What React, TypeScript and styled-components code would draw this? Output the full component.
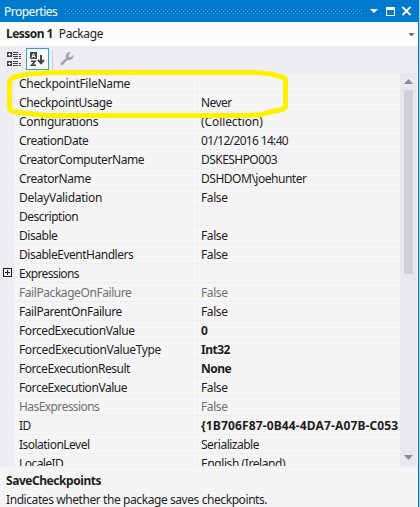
import React from "react";
import styled, { createGlobalStyle } from "styled-components";

const GlobalStyle = createGlobalStyle`
  * { box-sizing: border-box; }
  body { margin: 0; overflow: hidden; }
`;

const Panel = styled.div`
  position: relative;
  width: 420px;
  height: 507px;
  display: flex;
  flex-direction: column;
  overflow: hidden;
  background: #f5f5f5;
  border-right: 1px solid #a6d3f3;
  color: #1e1e1e;
  font: 12px/18px "Noto Sans", sans-serif;
  white-space: nowrap;
`;

const Content = styled.div`
  flex: 1;
  min-height: 0;
  display: flex;
  flex-direction: column;
  border-right: 1px solid #007acc;
`;

const TitleBar = styled.header`
  flex: none;
  height: 22px;
  padding: 0 7px 0 4px;
  display: flex;
  align-items: center;
  background: #007acc;
  color: #fff;
`;

const Title = styled.span`
  width: 61px;
  padding-top: 2px;
  letter-spacing: -0.5px;
`;

const Grip = styled.svg`
  width: 298px;
  height: 5px;
  flex: none;
`;

const WindowButtons = styled.svg`
  width: 43px;
  height: 22px;
  flex: none;
  margin-left: auto;
`;

const ObjectSelector = styled.div`
  flex: none;
  height: 24px;
  padding: 0 4px 0 6px;
  display: flex;
  align-items: center;
  gap: 6px;
  background: #fcfcfc;
`;

const ObjectName = styled.strong`
  font-weight: 700;
  letter-spacing: -0.55px;
`;

const ObjectType = styled.span`
  letter-spacing: -0.4px;
`;

const Caret = styled.svg`
  width: 5px;
  height: 3px;
  margin-left: auto;
  margin-top: 1px;
`;

const Toolbar = styled.div`
  flex: none;
  height: 27px;
  padding: 2px 0 0 3px;
  display: flex;
  align-items: flex-start;
  background: #eeeef2;
`;

const ToolButton = styled.div<{ $active?: boolean }>`
  width: 23px;
  height: 22px;
  display: flex;
  align-items: center;
  justify-content: center;
  border: 1px solid ${(p) => (p.$active ? "#3399ff" : "transparent")};
  background: ${(p) => (p.$active ? "#fcfcfc" : "transparent")};
`;

const Separator = styled.div`
  width: 1px;
  height: 20px;
  margin: 2px 2px 0 3px;
  background: #cccedb;
`;

const Body = styled.div`
  flex: none;
  height: 393px;
  display: flex;
  background: #eeeef2;
`;

const Rows = styled.div`
  flex: 1;
  min-width: 0;
  padding-top: 1px;
  overflow: hidden;
`;

const Row = styled.div<{ $muted?: boolean }>`
  height: 19px;
  display: grid;
  grid-template-columns: 15px 182px 1fr;
  color: ${(p) => (p.$muted ? "#717171" : "#1e1e1e")};
`;

const Gutter = styled.div`
  padding: 4px 0 0 3px;
  display: flex;
`;

const Cell = styled.div<{ $track?: number; $bold?: boolean; $value?: boolean }>`
  overflow: hidden;
  line-height: 19px;
  padding-left: ${(p) => (p.$value ? 3 : 4)}px;
  background: #f5f5f5;
  border-bottom: 1px solid #eeeef2;
  border-left: ${(p) => (p.$value ? "1px solid #eeeef2" : "0")};
  font-weight: ${(p) => (p.$bold ? 700 : 400)};
  letter-spacing: ${(p) => p.$track ?? 0}px;
`;

const ScrollTrack = styled.div`
  width: 18px;
  display: flex;
  flex-direction: column;
  align-items: center;
  background: #e8e8ec;
  border-right: 1px solid #f5f5f5;
`;

const ScrollArrow = styled.svg`
  width: 17px;
  height: 17px;
  flex: none;
`;

const Thumb = styled.div`
  width: 9px;
  height: 184px;
  margin-bottom: auto;
  background: #d0d1d7;
`;

const Help = styled.footer`
  flex: 1;
  padding: 5px 6px 0;
  border-top: 1px solid #eeeef2;
`;

const HelpTitle = styled.div`
  font-weight: 700;
  letter-spacing: -0.45px;
`;

const HelpText = styled.div`
  line-height: 20px;
  letter-spacing: -0.42px;
`;

const Highlight = styled.svg`
  position: absolute;
  left: 0;
  top: 66px;
  width: 300px;
  height: 56px;
`;

type Property = {
  name: string;
  nt: number;
  value?: string;
  vt?: number;
  bold?: boolean;
  muted?: boolean;
  expandable?: boolean;
};

const properties: Property[] = [
  { name: "CheckpointFileName", nt: -0.3 },
  { name: "CheckpointUsage", nt: -0.38, value: "Never", vt: -0.55 },
  { name: "Configurations", nt: -0.32, value: "(Collection)", vt: -0.1 },
  { name: "CreationDate", nt: -0.42, value: "01/12/2016 14:40", vt: -0.66 },
  { name: "CreatorComputerName", nt: -0.42, value: "DSKESHPO003", vt: -0.55 },
  { name: "CreatorName", nt: -0.4, value: "DSHDOM\\joehunter", vt: -0.48 },
  { name: "DelayValidation", nt: -0.3, value: "False", vt: -0.4 },
  { name: "Description", nt: -0.48 },
  { name: "Disable", nt: -0.45, value: "False", vt: -0.4 },
  { name: "DisableEventHandlers", nt: -0.48, value: "False", vt: -0.4 },
  { name: "Expressions", nt: -0.64, expandable: true },
  { name: "FailPackageOnFailure", nt: -0.43, value: "False", vt: -0.4, muted: true },
  { name: "FailParentOnFailure", nt: -0.44, value: "False", vt: -0.4 },
  { name: "ForcedExecutionValue", nt: -0.42, value: "0", bold: true },
  { name: "ForcedExecutionValueType", nt: -0.36, value: "Int32", vt: -0.5, bold: true },
  { name: "ForceExecutionResult", nt: -0.47, value: "None", vt: -0.5, bold: true },
  { name: "ForceExecutionValue", nt: -0.44, value: "False", vt: -0.4 },
  { name: "HasExpressions", nt: -0.57, value: "False", vt: -0.4, muted: true },
  { name: "ID", nt: -0.5, value: "{1B706F87-0B44-4DA7-A07B-C053", vt: 0.14, bold: true },
  { name: "IsolationLevel", nt: -0.52, value: "Serializable", vt: -0.5 },
  { name: "LocaleID", nt: -0.55, value: "English (Ireland)", vt: -0.42 },
];

const CategorizedIcon = () => (
  <svg width="15" height="15" viewBox="0 0 15 15" shapeRendering="crispEdges">
    <path fill="#424242" d="M0 0h5v5H0zM0 9h5v5H0z" />
    <path stroke="#eeeef2" d="M1 2.500h3M2.500 1v3M1 11.500h3M2.500 10v3" />
    <path
      stroke="#424242"
      d="M6 .5h5M6 2.500h5M12 2.500h2M6 4.500h5M12 4.500h2M7 6.500h4M12 6.500h2M6 9.500h5M6 11.500h5M12 11.500h2M6 13.500h5M12 13.500h2"
    />
  </svg>
);

const AlphabeticalIcon = () => (
  <svg width="15" height="15" viewBox="0 0 15 15">
    <path fill="#424242" d="M0 0h7v7H0z" />
    <path fill="none" stroke="#fcfcfc" d="M1.800 6 3.500 1.500 5.200 6M2.400 4.500h2.200" />
    <path fill="none" stroke="#424242" strokeWidth="1.6" d="M1 9.300h4.200L1.500 13.300H6" />
    <path fill="none" stroke="#424242" strokeWidth="2" d="M11 3v8M8 8l3 3.200L14 8" />
  </svg>
);

const WrenchIcon = () => (
  <svg width="14" height="14" viewBox="0 0 14 14">
    <path
      fill="#a5a5a8"
      d="M10.800.5 8.700 2.700v2.200h2.300l2.200-2.200c.9 2.900-1.300 5.800-4.500 5.300-.5-.1-.9-.1-1.300.2l-4.600 4.500C1.300 14.100-.3 12.300.8 10.900l4.600-4.500c.3-.3.3-.7.2-1.200C5.100 2 7.900-.3 10.800.5Z"
    />
  </svg>
);

export default function App() {
  return (
    <Panel>
      <GlobalStyle />
      <Content>
        <TitleBar>
          <Title>Properties</Title>
          <Grip shapeRendering="crispEdges">
            <defs>
              <pattern id="grip" width="4" height="4" patternUnits="userSpaceOnUse">
                <path fill="#59a8de" d="M0 0h1v1H0zM2 2h1v1H2z" />
              </pattern>
            </defs>
            <rect width="298" height="5" fill="url(#grip)" />
          </Grip>
          <WindowButtons viewBox="0 0 43 22">
            <path fill="#fff" d="M2 9h8l-4 4z" />
            <path fill="#fff" fillRule="evenodd" d="M18 7h9v9h-9zm1 3v5h7v-5z" />
            <path fill="none" stroke="#fff" strokeWidth="1.8" d="m34.500 7 8 8M42.500 7l-8 8" />
          </WindowButtons>
        </TitleBar>
        <ObjectSelector>
          <ObjectName>Lesson 1</ObjectName>
          <ObjectType>Package</ObjectType>
          <Caret viewBox="0 0 5 3">
            <path fill="#717171" d="M0 0h5v1L3 3H2L0 1z" />
          </Caret>
        </ObjectSelector>
        <Toolbar>
          <ToolButton><CategorizedIcon /></ToolButton>
          <ToolButton $active><AlphabeticalIcon /></ToolButton>
          <Separator />
          <ToolButton><WrenchIcon /></ToolButton>
        </Toolbar>
        <Body>
          <Rows>
            {properties.map((p) => (
              <Row key={p.name} $muted={p.muted}>
                <Gutter>
                  {p.expandable && (
                    <svg width="9" height="9" shapeRendering="crispEdges">
                      <path fill="none" stroke="#1e1e1e" d="M.5 .5h8v8h-8zM2 4.500h5M4.500 2v5" />
                    </svg>
                  )}
                </Gutter>
                <Cell $track={p.nt}>{p.name}</Cell>
                <Cell $value $bold={p.bold} $track={p.vt}>{p.value}</Cell>
              </Row>
            ))}
          </Rows>
          <ScrollTrack>
            <ScrollArrow viewBox="0 0 17 17">
              <path fill="#868999" d="M4 11h9L8.500 6z" />
            </ScrollArrow>
            <Thumb />
            <ScrollArrow viewBox="0 0 17 17">
              <path fill="#868999" d="M4 6h9l-4.500 5z" />
            </ScrollArrow>
          </ScrollTrack>
        </Body>
        <Help>
          <HelpTitle>SaveCheckpoints</HelpTitle>
          <HelpText>Indicates whether the package saves checkpoints.</HelpText>
        </Help>
      </Content>
      <Highlight viewBox="0 0 300 56">
        <path
          fill="none"
          stroke="#fff200"
          strokeWidth="5"
          strokeLinejoin="round"
          d="M50 6.500H255L271 8 282 11Q285.500 12 285.500 15V41L282 43.500 272 45.500 262 48.500 248 49.500H45L24 47 13 45.500Q9.500 44 9.500 41V17Q10 12 16 10.500L28 8Z"
        />
      </Highlight>
    </Panel>
  );
}
